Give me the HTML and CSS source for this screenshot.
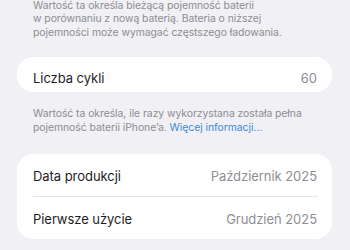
FILE: index.html
```html
<!DOCTYPE html>
<html lang="pl">
<head>
<meta charset="utf-8">
<link rel="stylesheet" href="styles.css">
</head>
<body>
<div class="page">
  <p class="note note-top">Wartość ta określa bieżącą pojemność baterii<br>w porównaniu z nową baterią. Bateria o niższej<br>pojemności może wymagać częstszego ładowania.</p>
  <div class="card card-single">
    <div class="row row-single"><span class="label">Liczba cykli</span><span class="value">60</span></div>
  </div>
  <p class="note note-mid">Wartość ta określa, ile razy wykorzystana została pełna<br>pojemność baterii iPhone’a. <span class="link">Więcej informacji…</span></p>
  <div class="card card-double">
    <div class="row"><span class="label">Data produkcji</span><span class="value">Październik 2025</span></div>
    <div class="divider"></div>
    <div class="row"><span class="label">Pierwsze użycie</span><span class="value">Grudzień 2025</span></div>
  </div>
</div>
</body>
</html>
```
FILE: styles.css
```css
html, body {
  margin: 0;
  padding: 0;
  background: #f0f0f5;
  height: 100%;
  overflow: hidden;
}
body {
  font-family: Inter, "Noto Sans", sans-serif;
  -webkit-font-smoothing: antialiased;
}
.page {
  padding: 0 18px 0 17px;
  display: flex;
  flex-direction: column;
}
.note {
  margin: 0;
  padding: 0 0 0 16px;
  font-size: 10.4px;
  line-height: 13.4px;
  color: #8d8d92;
  letter-spacing: -0.05px;
  white-space: nowrap;
}
.note-top {
  margin-top: -1px;
}
.note-mid {
  margin-top: 15px;
}
.link {
  color: #3b8ad6;
}
.card {
  background: #ffffff;
  border-radius: 16px;
}
.card-single {
  margin-top: 18px;
}
.card-double {
  margin-top: 20px;
}
.row {
  display: flex;
  justify-content: space-between;
  align-items: baseline;
  padding: 14px 15px 11px 16px;
  font-size: 13px;
  line-height: 17px;
  letter-spacing: -0.05px;
}
.row-single {
  padding-top: 13px;
  padding-bottom: 5px;
}
.label {
  color: #1d1d1f;
}
.value {
  color: #8e8e93;
}
.divider {
  height: 1px;
  background: #e6e6ea;
  margin: 0 14px 0 16px;
}
```
